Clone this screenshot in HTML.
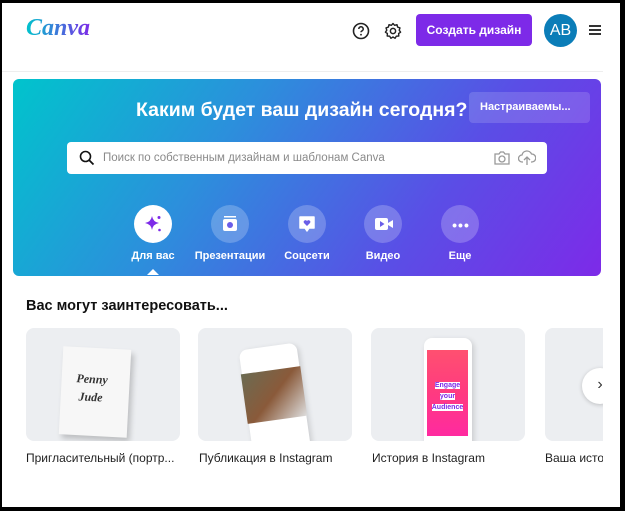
<!DOCTYPE html>
<html><head><meta charset="utf-8"><style>
*{margin:0;padding:0;box-sizing:border-box}
body{width:625px;height:511px;background:#000;font-family:"Liberation Sans",sans-serif;overflow:hidden;position:relative}
.page{position:absolute;left:2px;top:3px;width:618px;height:504px;background:#fff;overflow:hidden}
.a{position:absolute}
.lbl{position:absolute;color:#fff;font-size:11px;font-weight:bold;text-align:center;width:80px;top:247px}
.ic{position:absolute;width:38px;height:38px;border-radius:50%;background:rgba(255,255,255,.22);top:202px}
.card{position:absolute;top:325px;width:154px;height:113px;background:#eceef1;border-radius:8px;overflow:hidden}
.ct{position:absolute;top:448px;font-size:12px;color:#1f1f1f;white-space:nowrap}
</style></head><body><div class="page">
<div class="a" style="left:24px;top:12px;font-family:'Liberation Serif',serif;font-style:italic;font-size:24px;font-weight:bold;background:linear-gradient(90deg,#00c4cc,#7d2ae8);-webkit-background-clip:text;color:transparent">Canva</div>
<svg class="a" style="left:349px;top:18px" width="20" height="20" viewBox="0 0 20 20"><circle cx="10" cy="10" r="7.5" fill="none" stroke="#222" stroke-width="1.6"/><path d="M7.8 8a2.2 2.2 0 1 1 3 2c-.6.3-.8.7-.8 1.3" fill="none" stroke="#222" stroke-width="1.5"/><circle cx="10" cy="13.7" r=".9" fill="#222"/></svg>
<svg class="a" style="left:381px;top:18px" width="20" height="20" viewBox="0 0 20 20"><circle cx="10" cy="10" r="2.6" fill="none" stroke="#222" stroke-width="1.5"/><path d="M10 2.5l1.6 1.8 2.4-.6.6 2.4 2.4.8-.8 2.3 1.4 2-2 1.3.2 2.5-2.5.2-1.2 2.1-2.1-1.3-2.1 1.3-1.2-2.1-2.5-.2.2-2.5-2-1.3 1.4-2-.8-2.3 2.4-.8.6-2.4 2.4.6z" fill="none" stroke="#222" stroke-width="1.4" stroke-linejoin="round"/></svg>
<div class="a" style="left:414px;top:11px;width:116px;height:32px;background:#7d2ae8;border-radius:4px;color:#fff;font-size:12px;font-weight:bold;line-height:32px;text-align:center">Создать дизайн</div>
<div class="a" style="left:542px;top:11px;width:33px;height:33px;border-radius:50%;background:#0b7db8;color:#fff;font-size:16px;line-height:33px;text-align:center">AB</div>
<div class="a" style="left:587px;top:22px;width:12px;height:1.5px;background:#333;box-shadow:0 4px 0 #333,0 8px 0 #333"></div>
<div class="a" style="left:0;top:68px;width:618px;height:1px;background:#eee"></div>
<div class="a" style="left:11px;top:76px;width:588px;height:197px;border-radius:6px;background:linear-gradient(125deg,#00c4cc 0%,#2c8fdc 35%,#5a4ee6 70%,#7d2ae8 100%)"></div>
<div class="a" style="left:134px;top:96px;color:#fff;font-size:19.5px;font-weight:bold">Каким будет ваш дизайн сегодня?</div>
<div class="a" style="left:467px;top:89px;width:121px;height:31px;background:rgba(255,255,255,.15);border-radius:4px;color:#fff;font-size:11px;font-weight:bold;line-height:31px;padding-left:11px">Настраиваемы...</div>
<div class="a" style="left:65px;top:139px;width:480px;height:32px;background:#fff;border-radius:4px"></div>
<svg class="a" style="left:77px;top:147px" width="16" height="16" viewBox="0 0 16 16"><circle cx="6.5" cy="6.5" r="5" fill="none" stroke="#111" stroke-width="1.6"/><path d="M10 10l4.5 4.5" stroke="#111" stroke-width="1.8"/></svg>
<div class="a" style="left:101px;top:149px;font-size:11.5px;color:#8a8a8a">Поиск по собственным дизайнам и шаблонам Canva</div>
<svg class="a" style="left:491px;top:147px" width="18" height="16" viewBox="0 0 18 16"><path d="M2 4h4l1.5-2h3L12 4h4v10H2z" fill="none" stroke="#999" stroke-width="1.3"/><circle cx="9" cy="9" r="3" fill="none" stroke="#999" stroke-width="1.3"/></svg>
<svg class="a" style="left:516px;top:146px" width="18" height="17" viewBox="0 0 18 17"><path d="M5 13H4a3.5 3.5 0 0 1 0-7 5 5 0 0 1 9.5-1A3.7 3.7 0 0 1 14 13h-1" fill="none" stroke="#999" stroke-width="1.3"/><path d="M9 16V8m-3 3l3-3 3 3" fill="none" stroke="#999" stroke-width="1.3"/></svg>
<div class="ic" style="left:132px;background:#fff"></div>
<svg class="a" style="left:140px;top:210px" width="22" height="22" viewBox="0 0 22 22"><path d="M10 3q1 6 7 7q-6 1-7 7q-1-6-7-7q6-1 7-7z" fill="#7d2ae8"/><circle cx="17" cy="4.5" r="1.5" fill="#7d2ae8"/><circle cx="17.5" cy="17" r="1.3" fill="#7d2ae8"/></svg>
<div class="ic" style="left:209px"></div>
<svg class="a" style="left:218px;top:211px" width="20" height="20" viewBox="0 0 20 20"><rect x="4" y="2" width="12" height="1.5" fill="#fff"/><rect x="3" y="5" width="14" height="12" rx="2" fill="#fff"/><circle cx="10" cy="11" r="3" fill="#6a5ee8"/></svg>
<div class="ic" style="left:286px"></div>
<svg class="a" style="left:295px;top:211px" width="20" height="20" viewBox="0 0 20 20"><path d="M3 3h14v11h-5l-2 3-2-3H3z" fill="#fff" stroke="#fff" stroke-linejoin="round" stroke-width="1.5"/><path d="M10 12l-3-3a1.6 1.6 0 0 1 3-2a1.6 1.6 0 0 1 3 2z" fill="#6a5ee8"/></svg>
<div class="ic" style="left:362px"></div>
<svg class="a" style="left:371px;top:211px" width="22" height="20" viewBox="0 0 22 20"><rect x="2" y="4" width="13" height="12" rx="2" fill="#fff"/><path d="M15 9l5-3v8l-5-3z" fill="#fff"/><path d="M7 7v6l4.5-3z" fill="#6a5ee8"/></svg>
<div class="ic" style="left:439px"></div>
<div class="a" style="left:447px;top:219px;width:24px;color:#fff;font-size:14px;font-weight:bold;letter-spacing:1px;text-align:center;line-height:6px">•••</div>
<div class="lbl" style="left:111px">Для вас</div>
<div class="lbl" style="left:188px">Презентации</div>
<div class="lbl" style="left:265px">Соцсети</div>
<div class="lbl" style="left:341px">Видео</div>
<div class="lbl" style="left:418px">Еще</div>
<div class="a" style="left:145px;top:266px;width:0;height:0;border-left:6px solid transparent;border-right:6px solid transparent;border-bottom:6px solid #fff"></div>
<div class="a" style="left:24px;top:295px;font-size:14.5px;font-weight:bold;color:#111">Вас могут заинтересовать...</div>
<div class="card" style="left:24px"><div class="a" style="left:35px;top:20px;width:68px;height:88px;background:#f7f7f7;transform:rotate(3deg);box-shadow:3px 4px 6px rgba(0,0,0,.2)"></div><div class="a" style="left:50px;top:42px;font-family:'Liberation Serif',serif;font-weight:bold;font-style:italic;font-size:12px;color:#333;line-height:18px;transform:rotate(3deg)">Penny<br>&nbsp;Jude</div></div>
<div class="card" style="left:196px"><div class="a" style="left:48px;top:18px;width:58px;height:110px;background:#fff;border-radius:8px;transform:rotate(-8deg);box-shadow:2px 2px 6px rgba(0,0,0,.15)"></div><div class="a" style="left:46px;top:42px;width:60px;height:50px;background:linear-gradient(135deg,#6b6b52,#8a5a3a,#ddd);transform:rotate(-8deg)"></div></div>
<div class="card" style="left:369px"><div class="a" style="left:53px;top:10px;width:48px;height:112px;background:#fff;border-radius:8px;box-shadow:2px 2px 6px rgba(0,0,0,.15)"></div><div class="a" style="left:56px;top:22px;width:41px;height:86px;background:linear-gradient(180deg,#ff5070,#ff3a80,#ff2aa0)"></div><div class="a" style="left:60px;top:52px;width:33px;font-size:7px;font-weight:bold;color:#7d2ae8;text-align:center;line-height:11px"><span style="background:#fff">Engage</span><br><span style="background:#fff">your</span><br><span style="background:#fff">Audience</span></div></div>
<div class="card" style="left:543px;width:80px"></div>
<div class="a" style="left:580px;top:365px;width:36px;height:36px;border-radius:50%;background:#fff;box-shadow:0 1px 4px rgba(0,0,0,.2);text-align:center;line-height:34px;font-size:16px;color:#333">›</div>
<div class="ct" style="left:24px">Пригласительный (портр...</div>
<div class="ct" style="left:197px">Публикация в Instagram</div>
<div class="ct" style="left:370px">История в Instagram</div>
<div class="ct" style="left:543px">Ваша история</div>
<div class="a" style="left:601px;top:0;width:17px;height:504px;background:#fff;z-index:0"></div>
</div></body></html>
